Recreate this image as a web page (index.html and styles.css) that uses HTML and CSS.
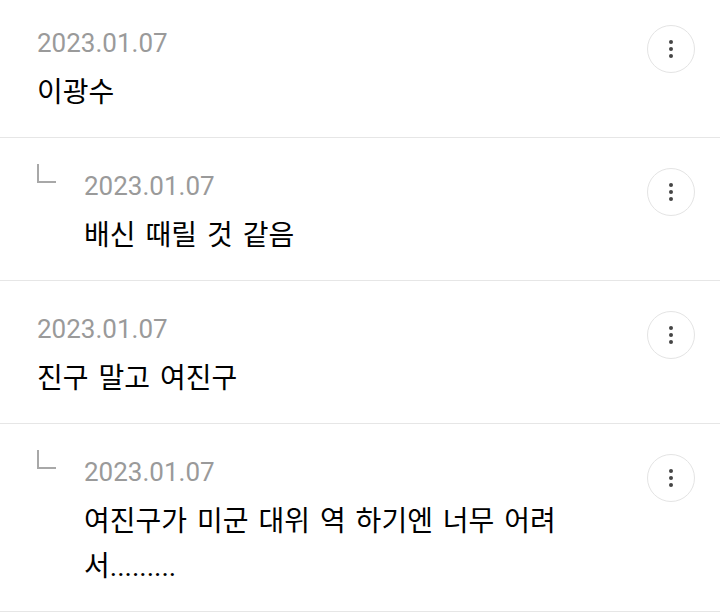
FILE: index.html
```html
<!DOCTYPE html>
<html lang="ko">
<head>
<meta charset="utf-8">
<link rel="stylesheet" href="styles.css">
</head>
<body>
<ul class="list">
  <li class="comment">
    <div class="body">
      <div class="date">2023.01.07</div>
      <div class="text">이광수</div>
    </div>
    <button class="more" aria-label="더보기"><span class="dot"></span><span class="dot"></span><span class="dot"></span></button>
  </li>
  <li class="comment reply">
    <span class="corner"></span>
    <div class="body">
      <div class="date">2023.01.07</div>
      <div class="text">배신 때릴 것 같음</div>
    </div>
    <button class="more" aria-label="더보기"><span class="dot"></span><span class="dot"></span><span class="dot"></span></button>
  </li>
  <li class="comment">
    <div class="body">
      <div class="date">2023.01.07</div>
      <div class="text">진구 말고 여진구</div>
    </div>
    <button class="more" aria-label="더보기"><span class="dot"></span><span class="dot"></span><span class="dot"></span></button>
  </li>
  <li class="comment reply">
    <span class="corner"></span>
    <div class="body">
      <div class="date">2023.01.07</div>
      <div class="text">여진구가 미군 대위 역 하기엔 너무 어려서.........</div>
    </div>
    <button class="more" aria-label="더보기"><span class="dot"></span><span class="dot"></span><span class="dot"></span></button>
  </li>
</ul>
</body>
</html>
```

FILE: styles.css
```css
html, body {
  margin: 0;
  padding: 0;
  background: #ffffff;
}

.list {
  list-style: none;
  margin: -5px 0 0 0;
  padding: 0;
}

.comment {
  display: flex;
  align-items: flex-start;
  padding: 30px 25px 0 37px;
  border-bottom: 1px solid #e6e6e6;
}

.corner {
  flex: none;
  width: 19px;
  height: 19px;
  margin-top: -4px;
  margin-right: 28px;
  border-left: 2px solid #a8a8a8;
  border-bottom: 2px solid #a8a8a8;
  box-sizing: border-box;
}

.body {
  flex: 1;
  min-width: 0;
  padding-top: 3px;
  padding-bottom: 22px;
  margin-right: 40px;
}

.date {
  font-family: Roboto, "Noto Sans", sans-serif;
  font-size: 26px;
  line-height: 30px;
  color: #9a9a9a;
}

.text {
  margin-top: 12px;
  font-family: Roboto, "Noto Sans CJK KR", sans-serif;
  font-size: 28px;
  line-height: 45px;
  word-spacing: 3px;
  color: #000000;
}

.more {
  flex: none;
  width: 48px;
  height: 48px;
  padding: 0;
  border: 1px solid #e4e4e4;
  border-radius: 50%;
  background: #ffffff;
  display: flex;
  flex-direction: column;
  align-items: center;
  justify-content: center;
  gap: 3px;
}

.dot {
  width: 4px;
  height: 4px;
  border-radius: 50%;
  background: #454545;
}
```
